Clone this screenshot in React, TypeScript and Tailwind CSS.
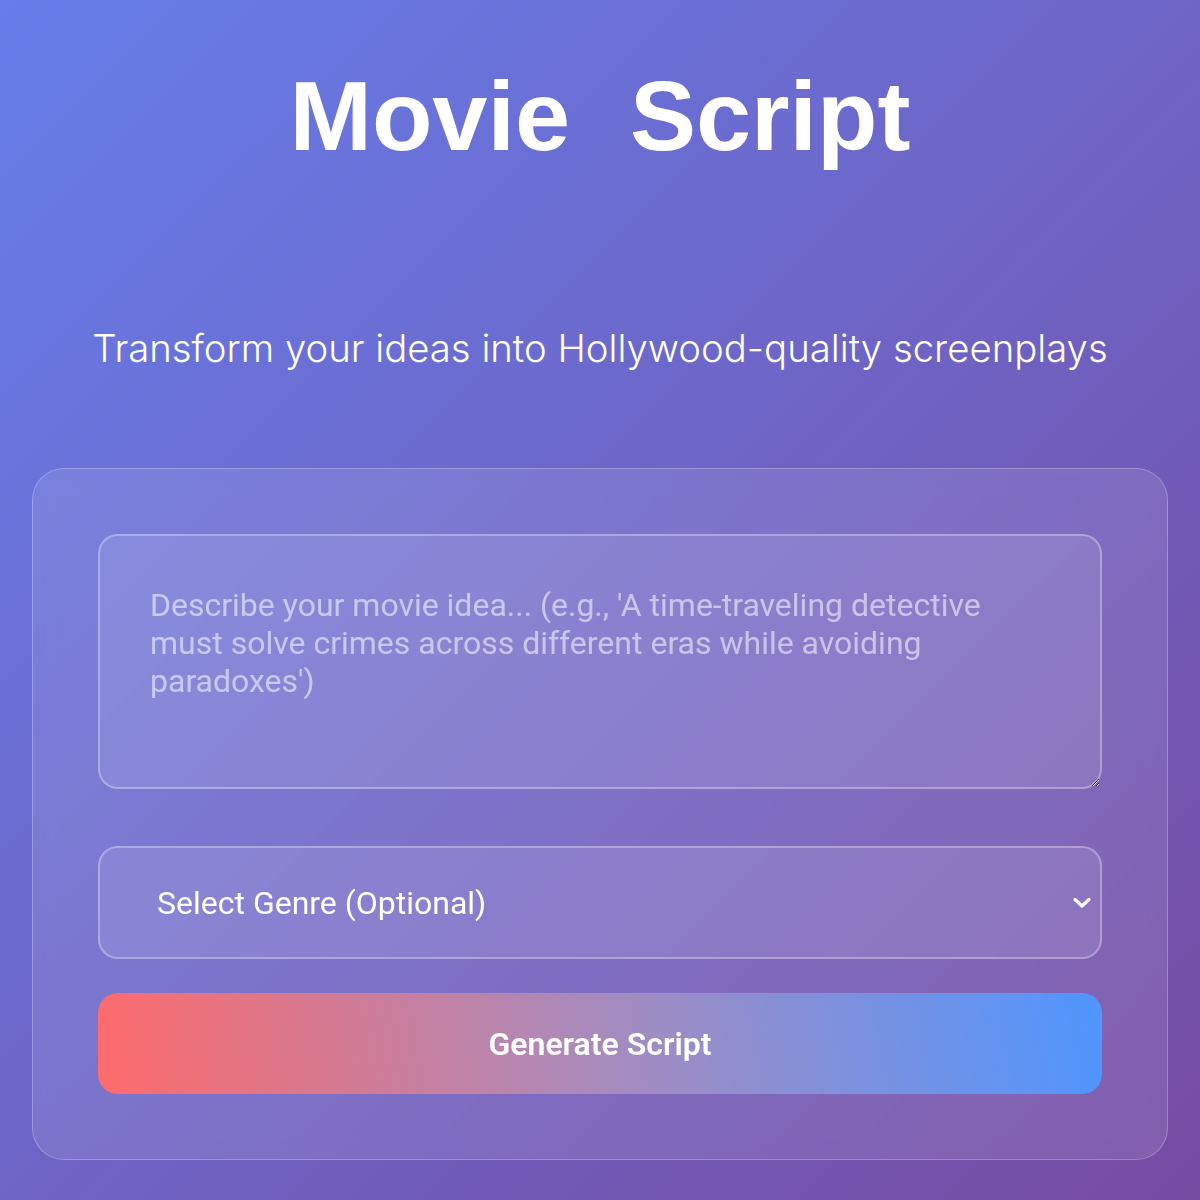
import React from 'react';

const App: React.FC = () => {
  return (
    <div className="min-h-screen w-full bg-[linear-gradient(135deg,#667eea_0%,#764ba2_100%)] px-8 pb-10 font-['Roboto',sans-serif] text-white">
      <div className="flex flex-col items-center">
        <h1 className="mt-[66px] flex gap-[60px] font-['Liberation_Sans',Arial,sans-serif] text-[99px] font-bold leading-none text-white">
          <span>Movie</span>
          <span>Script</span>
        </h1>
        <p className="mt-[164px] font-['Inter',sans-serif] text-[38.3px] font-light leading-none text-white">
          Transform your ideas into Hollywood-quality screenplays
        </p>
      </div>

      <div className="mt-[101px] rounded-[32px] border border-white/25 bg-white/10 p-[65px] backdrop-blur-md">
        <textarea
          className="block h-[255px] w-full rounded-[20px] border-2 border-white/30 bg-white/10 pl-[50px] pr-[70px] pt-[50px] pb-12 font-['Roboto',sans-serif] text-[32px] leading-[38px] text-white outline-none placeholder:text-white/55"
          placeholder="Describe your movie idea... (e.g., 'A time-traveling detective must solve crimes across different eras while avoiding paradoxes')"
        />

        <div className="relative mt-[57px]">
          <select
            className="block h-[113px] w-full appearance-none rounded-[20px] border-2 border-white/30 bg-white/10 pl-[57px] pr-16 font-['Roboto',sans-serif] text-[32px] text-white outline-none"
            defaultValue=""
          >
            <option value="" className="text-black">Select Genre (Optional)</option>
            <option value="drama" className="text-black">Drama</option>
            <option value="comedy" className="text-black">Comedy</option>
            <option value="thriller" className="text-black">Thriller</option>
          </select>
          <svg
            className="pointer-events-none absolute right-[10px] top-1/2 h-[12px] w-[20px] -translate-y-1/2"
            viewBox="0 0 20 12"
            fill="none"
            stroke="white"
            strokeWidth="3.2"
            strokeLinecap="round"
            strokeLinejoin="round"
          >
            <path d="M3 2.5 L10 9 L17 2.5" />
          </svg>
        </div>

        <button className="mt-[34px] block h-[101px] w-full rounded-[20px] bg-[linear-gradient(80deg,#ff6b6b_0%,#a88bbd_50%,#4f96ff_100%)] font-['Roboto',sans-serif] text-[32px] font-semibold text-white">
          Generate Script
        </button>
      </div>
    </div>
  );
};

export default App;
